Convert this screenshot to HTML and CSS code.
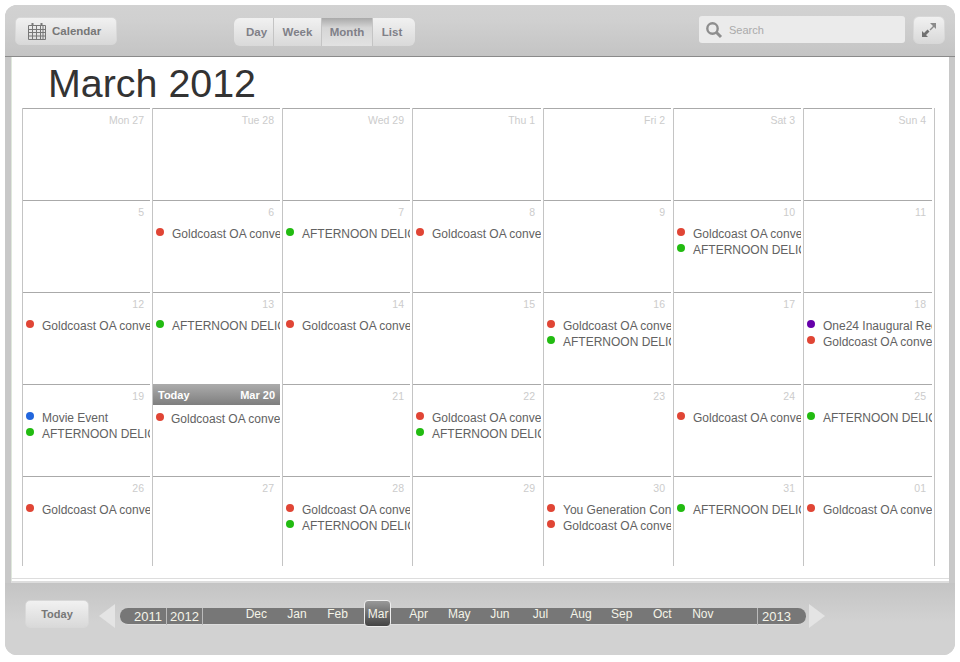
FILE: index.html
```html
<!DOCTYPE html>
<html>
<head>
  <meta charset="UTF-8">
  <title>Calendar</title>
  <link rel="stylesheet" href="styles.css">
</head>
<body>

<div class="app">

  <div class="toolbar">
    <div class="btn cal-btn">
      <svg width="18" height="18" viewBox="0 0 18 18" fill="none" stroke="#777" stroke-width="1">
        <path d="M.5 3.500h17v14H.5zM.5 7.500h17M.5 10.500h17M.5 14h17M4.500 3.500v14M8.500 3.500v14M12.500 3.500v14M15 3.500v14"/>
        <path d="M4.500 1v3M13.500 1v3" stroke-width="2"/>
      </svg>
      Calendar
    </div>
    <div class="views">
      <div class="view view-day">Day</div>
      <div class="view view-week">Week</div>
      <div class="view view-month active">Month</div>
      <div class="view view-list">List</div>
    </div>
    <div class="search">
      <svg width="18" height="18" viewBox="0 0 18 18" fill="none" stroke="#8e8e8e">
        <circle cx="7.500" cy="7.500" r="5.200" stroke-width="2.400"/>
        <path d="M11.500 11.500l4.500 4.500" stroke-width="3"/>
      </svg>
      <span>Search</span>
    </div>
    <div class="btn expand">
      <svg width="16" height="16" viewBox="0 0 16 16">
        <path fill="#8a8a8a" d="M9 1h6v6l-2-2-3.500 3.500-1-1L12 4z"/>
        <path fill="#707070" d="M7 15H1V9l2 2 3.500-3.500 2 2L5 13z"/>
      </svg>
    </div>
  </div>

  <div class="sheet">
    <h1>March 2012</h1>
    <div class="grid" id="grid"></div>
    <div class="sheet-foot"></div>
  </div>

  <div class="footer">
    <div class="btn today-btn">Today</div>
    <div class="arrow arrow-left"></div>
    <div class="track">
      <div class="year y2011">2011</div>
      <div class="year y2012">2012</div>
      <div class="months">
        <div class="month">Dec</div>
        <div class="month">Jan</div>
        <div class="month">Feb</div>
        <div class="month sel">Mar</div>
        <div class="month">Apr</div>
        <div class="month">May</div>
        <div class="month">Jun</div>
        <div class="month">Jul</div>
        <div class="month">Aug</div>
        <div class="month">Sep</div>
        <div class="month">Oct</div>
        <div class="month">Nov</div>
      </div>
      <div class="year y2013">2013</div>
    </div>
    <div class="arrow arrow-right"></div>
  </div>

</div>

<script>
  const G = ["#e04535", "Goldcoast OA convention"];
  const A = ["#22bb11", "AFTERNOON DELICIOUS"];
  const days = [
    ["Mon 27"], ["Tue 28"], ["Wed 29"], ["Thu 1"], ["Fri 2"], ["Sat 3"], ["Sun 4"],
    ["5"], ["6", G], ["7", A], ["8", G], ["9"], ["10", G, A], ["11"],
    ["12", G], ["13", A], ["14", G], ["15"], ["16", G, A], ["17"], ["18", ["#6600aa", "One24 Inaugural Reception"], G],
    ["19", ["#2266dd", "Movie Event"], A], ["Mar 20", G], ["21"], ["22", G, A], ["23"], ["24", G], ["25", A],
    ["26", G], ["27"], ["28", G, A], ["29"], ["30", ["#e04535", "You Generation Conference"], G], ["31", A], ["01", G]
  ];

  const grid = document.getElementById("grid");

  days.forEach(d => {
    const cell = document.createElement("div");
    cell.className = "cell";
    const isToday = d[0] === "Mar 20";
    if (isToday) {
      cell.classList.add("today");
      cell.innerHTML = '<div class="today-head"><span>Today</span><span>Mar 20</span></div>';
    } else {
      cell.innerHTML = '<div class="num">' + d[0] + '</div>';
    }
    d.slice(1).forEach(ev => {
      const row = document.createElement("div");
      row.className = "event";
      row.innerHTML = '<i class="dot" style="background:' + ev[0] + '"></i><span>' + ev[1] + '</span>';
      cell.appendChild(row);
    });
    grid.appendChild(cell);
  });
</script>

</body>
</html>
```

FILE: styles.css
```css
body {
  margin: 0;
  background: #fff;
  font-family: "Liberation Sans", Arial, sans-serif;
}

.app {
  width: 950px;
  height: 650px;
  margin: 5px;
  border-radius: 12px;
  background: #c8c8c8;
  display: flex;
  flex-direction: column;
  overflow: hidden;
}

/* top bar */
.toolbar {
  height: 52px;
  flex: none;
  display: flex;
  align-items: flex-start;
  background: linear-gradient(#d2d2d2, #d0d0d0 30%, #c4c4c4);
  border-bottom: 1px solid #8a8a8a;
  box-sizing: border-box;
  padding-top: 11px;
}

.btn {
  box-sizing: border-box;
  border-radius: 5px;
  border: 1px solid #d8d8d8;
  background: linear-gradient(#f1f1f1, #d9d9d9);
  color: #777;
  font-size: 11px;
  font-weight: bold;
  display: flex;
  align-items: center;
  justify-content: center;
}

.cal-btn {
  width: 102px;
  height: 28px;
  margin: 1px 0 0 10px;
  justify-content: flex-start;
  padding-left: 12px;
  gap: 6px;
  font-size: 11.5px;
}

.views {
  display: flex;
  margin: 2px 0 0 117px;
  height: 28px;
  width: 181px;
  border-radius: 6px;
  overflow: hidden;
  background: linear-gradient(#f1f1f1, #d9d9d9);
}

.view {
  font-size: 11.5px;
  font-weight: bold;
  color: #808088;
  line-height: 29px;
  text-align: center;
  border-right: 1px solid #c4c4c4;
  box-sizing: border-box;
}

.view-day { width: 40px; padding-left: 6px; }
.view-week { width: 48px; }
.view-month { width: 51px; }
.view-list { width: 42px; border-right: 0; padding-right: 4px; }

.view.active {
  background: linear-gradient(#a9a9a9, #d6d6d6 35%, #e2e2e2);
}

.search {
  width: 206px;
  height: 27px;
  margin-left: auto;
  border-radius: 3px;
  background: #ebebeb;
  display: flex;
  align-items: center;
  box-sizing: border-box;
  padding-left: 6px;
  gap: 6px;
  color: #aaa;
  font-size: 11px;
}

.expand {
  width: 32px;
  height: 28px;
  margin: 0 10px 0 8px;
  border-radius: 6px;
}

/* white sheet */
.sheet {
  flex: 1;
  margin: 0 6px;
  background: #fff;
  border-left: 1px solid #dfe8dc;
  box-sizing: border-box;
  padding-left: 10px;
  display: flex;
  flex-direction: column;
}

h1 {
  margin: 0 0 0 26px;
  height: 51px;
  font-size: 39.4px;
  font-weight: normal;
  line-height: 52px;
  color: #333;
}

.grid {
  width: 912px;
  display: grid;
  grid-template-columns: 130px 130px 130px 131px 130px 130px 131px;
  grid-auto-rows: 92px;
  height: 458px;
  overflow: hidden;
  border-right: 1px solid #c4c4c4;
}

.cell {
  border-left: 1px solid #c4c4c4;
  overflow: hidden;
  padding-right: 2px;
}

.cell::before {
  content: "";
  display: block;
  border-top: 1px solid #aaa;
}

.num {
  text-align: right;
  font-size: 10.5px;
  line-height: 12px;
  color: #ccc;
  padding: 5px 6px 0 0;
  height: 20px;
}

.event {
  height: 16px;
  line-height: 16px;
  font-size: 12px;
  color: #626262;
  white-space: nowrap;
  overflow: hidden;
  display: flex;
  align-items: center;
}

.dot {
  flex: none;
  width: 8px;
  height: 8px;
  border-radius: 50%;
  margin: -4px 8px 0 3px;
}

.today-head {
  height: 20px;
  line-height: 20px;
  background: linear-gradient(#aaa, #7e7e7e);
  color: #fff;
  font-size: 11px;
  font-weight: bold;
  display: flex;
  justify-content: space-between;
  padding: 0 5px;
  margin-bottom: 6px;
}

.today .dot {
  margin-right: 7px;
}

.sheet-foot {
  height: 5px;
  margin: auto 0 0 -11px;
  width: 938px;
  border-top: 1px solid #ddd;
  border-bottom: 2px solid #ddd;
  box-sizing: border-box;
}

/* bottom bar */
.footer {
  height: 72px;
  flex: none;
  box-sizing: border-box;
  display: flex;
  align-items: flex-start;
  padding: 17px 0 0 20px;
  background: linear-gradient(#c4c4c4, #d2d2d2 55%);
}

.today-btn {
  width: 64px;
  height: 28px;
  font-size: 11px;
}

.arrow {
  width: 0;
  height: 0;
  margin-top: 4px;
  border-top: 12px solid transparent;
  border-bottom: 12px solid transparent;
}

.arrow-left {
  margin-left: 10px;
  border-right: 16px solid #e4e4e4;
}

.arrow-right {
  margin-left: 3px;
  border-left: 16px solid #e4e4e4;
}

.track {
  width: 686px;
  height: 17px;
  margin: 8px 0 0 5px;
  flex: none;
  box-sizing: border-box;
  background: #777;
  border-bottom: 1px solid #ddd;
  border-radius: 8px;
  display: flex;
  color: #f4f4e8;
}

.year {
  box-sizing: border-box;
  font-size: 13px;
  line-height: 18px;
  height: 17px;
  border-right: 1px solid #bbb;
}

.y2011 { width: 47px; padding-left: 14px; }
.y2012 { width: 36px; padding-left: 3px; }
.y2013 { border-right: 0; border-left: 1px solid #bbb; padding-left: 4px; }

.months {
  display: flex;
  width: 554px;
  padding-left: 33px;
  box-sizing: border-box;
}

.month {
  width: 40.6px;
  flex: none;
  text-align: center;
  font-size: 12px;
  line-height: 12px;
  height: 16px;
}

.month.sel {
  position: relative;
  z-index: 1;
}

.month.sel::before {
  content: "";
  position: absolute;
  z-index: -1;
  left: 6px;
  top: -8px;
  width: 27px;
  height: 27px;
  box-sizing: border-box;
  border: 1px solid #eee;
  border-radius: 4px;
  background: linear-gradient(#999, #444);
}
```
